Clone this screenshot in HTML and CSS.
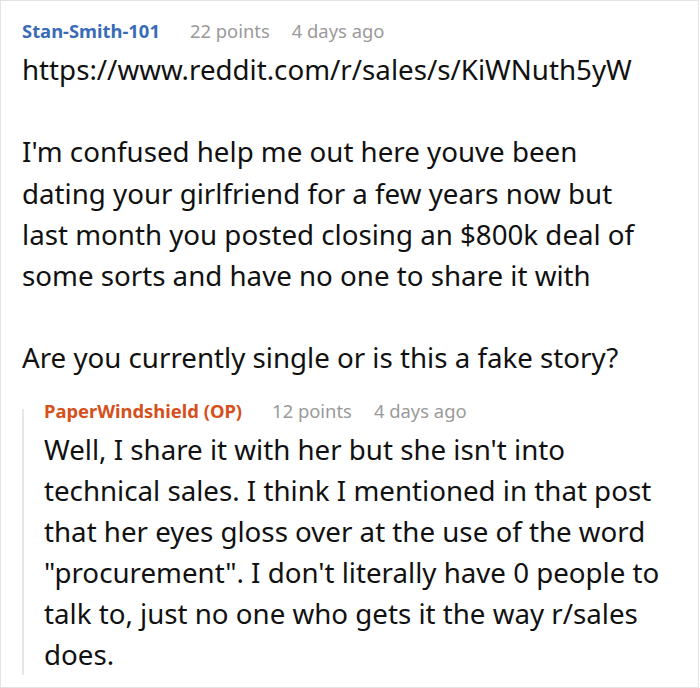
FILE: index.html
```html
<!DOCTYPE html>
<html lang="en">
<head>
<meta charset="utf-8">
<title>Comment thread</title>
<link rel="stylesheet" href="styles.css">
</head>
<body>
<div class="thread">
  <div class="comment">
    <div class="meta">
      <span class="author">Stan-Smith-101</span>
      <span class="score">22 points</span>
      <span class="age">4 days ago</span>
    </div>
    <div class="body top">
      <p>https://www.reddit.com/r/sales/s/KiWNuth5yW</p>
      <p>I'm confused help me out here youve been dating your girlfriend for a few years now but last month you posted closing an $800k deal of some sorts and have no one to share it with</p>
      <p>Are you currently single or is this a fake story?</p>
    </div>
    <div class="replies">
      <div class="comment">
        <div class="meta">
          <span class="author op">PaperWindshield (OP)</span>
          <span class="score">12 points</span>
          <span class="age">4 days ago</span>
        </div>
        <div class="body">
          <p>Well, I share it with her but she isn't into technical sales. I think I mentioned in that post that her eyes gloss over at the use of the word "procurement". I don't literally have 0 people to talk to, just no one who gets it the way r/sales does.</p>
        </div>
      </div>
    </div>
  </div>
</div>
</body>
</html>
```
FILE: styles.css
```css
html, body {
  margin: 0;
  padding: 0;
  background: #ffffff;
}

.thread {
  box-sizing: border-box;
  width: 699px;
  height: 688px;
  border: 1px solid #e3e3e3;
  padding: 18px 26px 0 21px;
  font-family: "Noto Sans", "Open Sans", sans-serif;
  color: #111111;
  overflow: hidden;
}

.meta {
  display: flex;
  align-items: baseline;
  gap: 30px;
  font-size: 18.4px;
  line-height: 24px;
}

.author {
  font-weight: 700;
  color: #3a6bb7;
}

.author.op {
  color: #d5501c;
}

.score,
.age {
  color: #9a9a9a;
  margin-right: -8px;
}

.body {
  margin-top: 6px;
  font-size: 27.7px;
  line-height: 41.2px;
}

.body.top {
  padding-right: 16px;
}

.body p {
  margin: 0 0 41.2px 0;
}

.body p:last-child {
  margin-bottom: 0;
}

/* nested replies: thin guide line on the left, starting just below the reply's top */
.replies {
  margin-top: 20px;
  padding-left: 22px;
  background: linear-gradient(#e6e6e6, #e6e6e6) no-repeat 0 10px / 2px calc(100% - 10px);
}

.replies .body {
  margin-top: 6px;
  line-height: 41px;
}
```
